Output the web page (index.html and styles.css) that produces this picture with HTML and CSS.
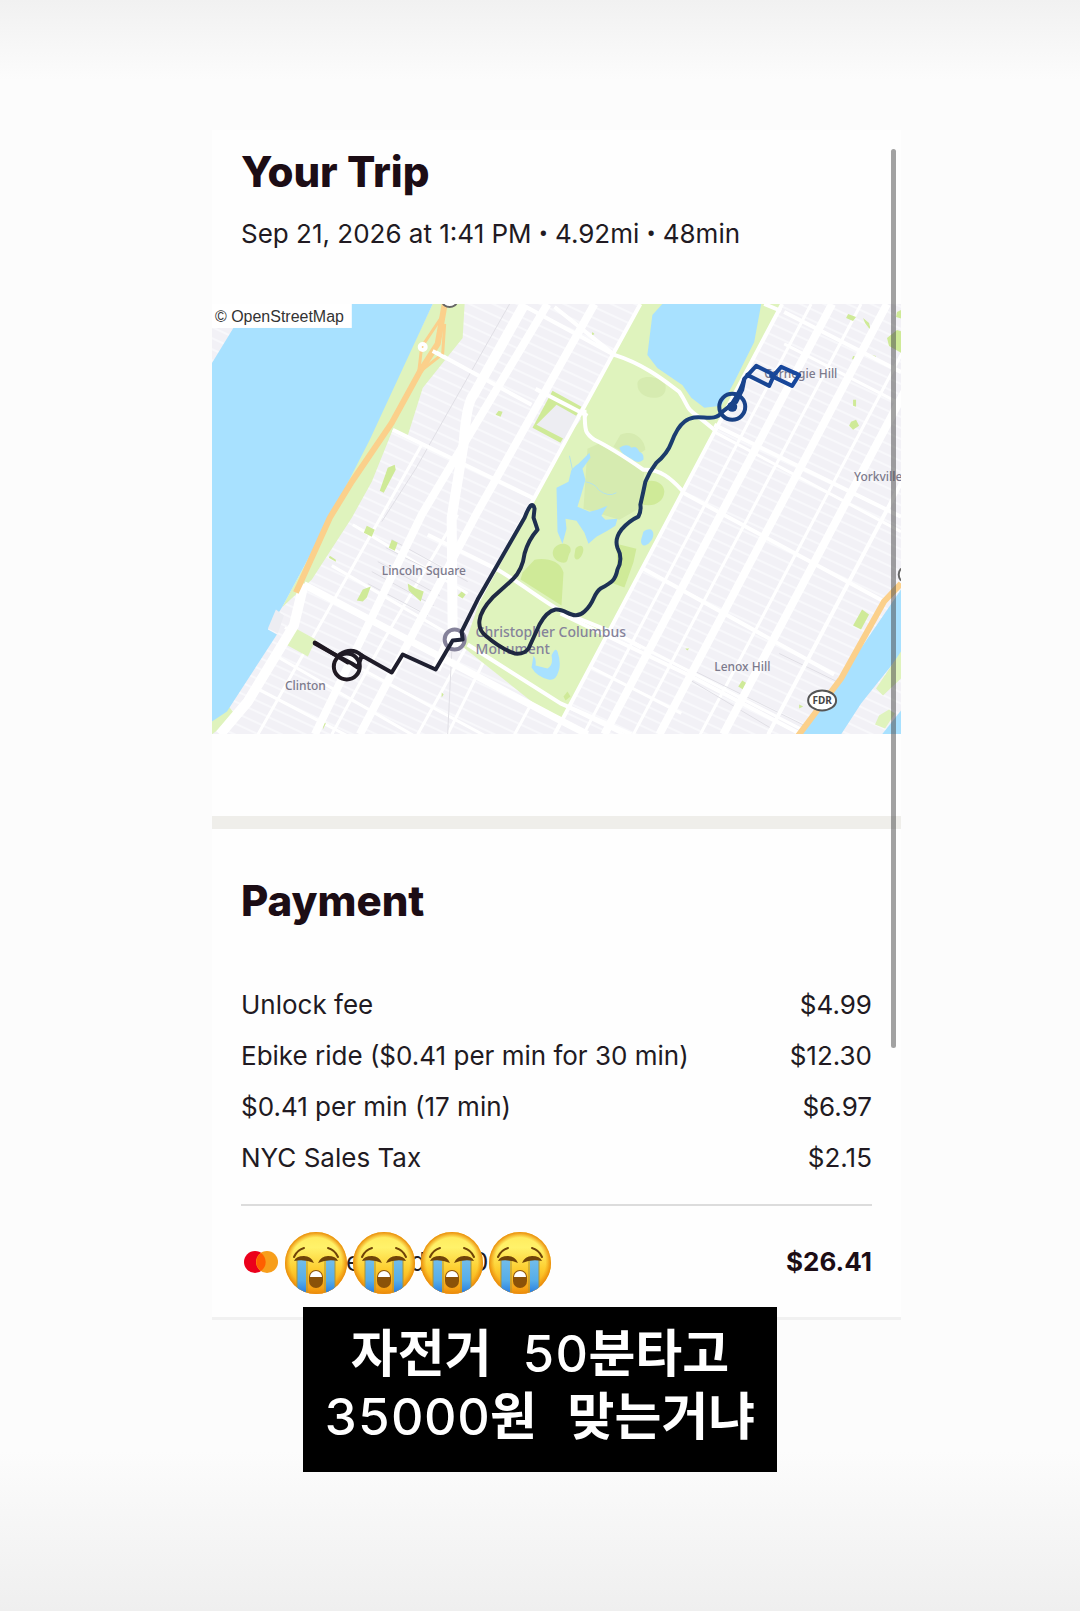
FILE: index.html
```
<!DOCTYPE html>
<html lang="en">
<head>
    <meta charset="UTF-8">
    <meta name="viewport" content="width=device-width, initial-scale=1.0">
    <title>Your Trip</title>
    <link rel="stylesheet" href="styles.css">
</head>
<body>

<main class="story">
    <article class="receipt">
        <div class="scroll-thumb"></div>

        <!-- Trip summary -->
        <header class="trip">
            <h1 class="heading">Your Trip</h1>
            <p class="trip-info">Sep 21, 2026 at 1:41 PM <span class="dot">•</span> 4.92mi <span class="dot">•</span> 48min</p>
        </header>

        <!-- Route map -->
        <svg class="map" viewBox="0 0 690 431" role="img" aria-label="Route map">
            <defs>
                <pattern id="blocks" width="40" height="10" patternUnits="userSpaceOnUse" patternTransform="rotate(25)">
                    <rect width="40" height="10" fill="#f2f1f6"/>
                    <rect width="40" height="2" fill="#f8f8fb"/>
                </pattern>
                <linearGradient id="ride" gradientUnits="userSpaceOnUse" x1="103" y1="340" x2="588" y2="71">
                    <stop offset="0" stop-color="#1f1820"/>
                    <stop offset=".35" stop-color="#1f2a45"/>
                    <stop offset=".7" stop-color="#1c3b66"/>
                    <stop offset="1" stop-color="#1748a0"/>
                </linearGradient>
            </defs>

            <rect width="690" height="431" fill="url(#blocks)"/>

            <!-- Minor streets -->
            <g class="street thin">
                <path d="M210 141L46 431M246 211L170 340L120 431M298 306L236 431M256 341L206 431M328 385L303 431"/>
                <path d="M600 0L372 431M650 0L422 431M717 0L489 431"/>
                <path d="M141 221L256 290M120 262L236 330M73 324L343 470M60 350L250 460M45 385L150 440M256 341L349 400L430 440"/>
                <path d="M503 128L690 228M343 345L470 410M405 330L600 431M573 40L690 100"/>
            </g>
            <g class="rail">
                <path d="M298 0L204 165L170 218M241 330L236 431M180 236L256 278M174 244L236 276M166 258L228 292M160 268L222 302M156 280L216 312M568 350L640 385M476 375L560 425M480 366L690 470"/>
            </g>

            <!-- Parks -->
            <path class="park" d="M429 0H571L349 421L252 344L268 298Z"/>
            <path class="park" d="M221 0H253L251 34L211 84L196 132L181 126L160 178L140 214L100 276L70 304L113 224Z"/>
            <path class="park" d="M82 324L104 336L96 353L74 341ZM0 418L16 402L24 412L0 431Z"/>
            <path class="lawn" d="M341 87L370 103L349 139L321 124Z"/>
            <path class="lawn" d="M176 164l7-3l1 5l-12 23l-4-2ZM155 222l8 4l-3 7l-8-4ZM180 236l6 3l-3 8l-6-3ZM118 252l6 4v2l-7-4ZM145 297l6-11l8-3l-4 11l-4 4ZM196 280l8 5l8 3l-3 10l-12-11ZM250 288l4 3l-3 4l-5-3ZM287 107l4 1l-2 5l-5-2Z"/>
            <path class="lawn" d="M637 10l8 3l-3 4l-7-3ZM652 14l6 5l2 8l-6-8ZM686 8l6-3v10l-7-2ZM676 34l10-8l6 2v22l-14-8ZM642 52l5 1l-2 4l-4-2ZM642 96h3v7l-3-1ZM640 118l5-2l3 6l-6 4l-4-4ZM660 51l5 1l-2 4l-3-2ZM651 306l7 5l-8 15l-8-4ZM531 377l8 5l-4 6l-8-5ZM588 401l4 2l-4 2ZM474 345h4l-2 2ZM112 418l2 2l-3 6ZM230 389l2 2l-2 3ZM381 28l2 2l-3 2Z"/>
            <path class="paved" d="M345 101L370 115L354 136L325 121Z"/>
            <path class="grass" d="M426 80c0-8 18-10 28 0c2 10-4 14-12 14c-9-1-16-5-16-14Z"/>
            <path class="grass" d="M376 145L387 140L433 166L429 204L408 216L372 205Z"/>
            <path class="grass" d="M409 131c12-6 24 3 25 15l-12 8l-20-11Z"/>
            <path class="lawn" d="M311 269L323 256C335 254 349 257 352 269L350 302L309 276ZM343 244c6-7 18-4 16 4c-4 6-1 12-9 11c-8-2-11-9-7-15ZM364 245c5-6 10-2 7 5c-3 8-9 7-8 1ZM405 240l20 5l-3 14l-9 25l-11-4l4-13ZM435 178c8-3 18 2 18 10c-1 12-13 16-24 12Z"/>
            <path class="water" d="M451 0H550L543 38L523 78L510 102L493 104L480 94L471 81L446 64L436 51L441 11Z"/>
            <path class="water" d="M345 184L357 178L360 166L364 162L367 160L378 149L379 154L371 165L374 176L370 190L366 203L378 208L386 206L396 202L390 212L394 216L406 215L404 222L396 227L385 233L377 240L373 229L365 217L354 215L355 225L351 240L346 228Z"/>
            <path class="water" d="M408 144q8-5 12 0q5-3 8 4q5 2 4 8q-6 5-12-1q-10-3-12-11ZM432 228c8-6 12 0 9 7c-6 10-13 8-11 0ZM322 352q3 4 2 10l12 3q6-3 4-13q4-9 6-4q4 12 1 20q-3 10-10 8q-12-3-17-12Z"/>
            <path class="stream" d="M361 166l-3-14M374 178q10 2 13 8q10 8 18 3"/>
            <path class="drive" d="M343 3L403 51C435 61 457 80 468 88C478 103 474 104 486 112L503 126M373 106C374 126 372 128 383 136C400 144 416 155 432 166C449 165 460 175 471 187M284 265C309 279 329 296 349 307C375 320 400 325 430 344M553 0L570 7"/>
            <path class="lawn" d="M352 393l4-5l3 5l-5 4Z"/>

            <!-- Avenues -->
            <g class="street wide">
                <path d="M336 0L210 211L103 431"/>
                <path d="M383 0L266 208L148 431"/>
                <path d="M621 0L393 431M676 0L448 431M740 0L512 431"/>
                <path class="broadway" d="M313 0L262 91Q255 98 252 140L240 214L241 328L224 366"/>
                <path class="broadway" d="M92 280L82 322L36 398L8 431"/>
            </g>
            <g class="street">
                <path d="M429 0L266 298M571 0L343 431M785 0L557 431"/>
                <path d="M220 46L320 101M181 126L321 194M313 2L403 51M216 231L284 265"/>
                <path class="major" d="M92 281L343 414L376 431"/>
                <path d="M573 8L690 68M503 121L690 213M470 188L673 298M430 264L623 371M349 310L476 371L590 431M256 341L349 400L420 431M324 85L376 112"/>
            </g>

            <!-- Rivers -->
            <path class="water" d="M22 23L30 0H221L158 136L113 224L70 304L56 326L65 331L15 408L0 418V59Z"/>
            <path class="paved" d="M64 306L72 312L66 330L56 325Z"/>
            <path class="water" d="M690 286V350L650 400L630 431H591Z"/>
            <path class="park" d="M690 348L665 385L672 392L690 375ZM668 412l10-6l6 4l-10 15l-10-4Z"/>
            <path class="water" d="M690 407L671 431H690Z"/>
            <g class="highway">
                <path d="M233 0L226 40L208 68L180 119L140 178L118 214L90 276L84 289"/>
                <path d="M232 10L210 43L207 68M233 20L231 50L208 68"/>
                <path d="M690 280L673 298L630 375L585 435"/>
            </g>
            <path class="ramp" d="M221 47L234 54"/>
            <circle class="ramp" cx="211" cy="43" r="3"/>
            <path class="road-sign" d="M231 -2a7 5 0 0 0 14 0M690 265a9 9 0 0 0 0 12"/>

            <!-- Place names -->
            <g class="place">
                <text x="170" y="271">Lincoln Square</text>
                <text x="73" y="387">Clinton</text>
                <text x="503" y="368">Lenox Hill</text>
                <text x="553" y="74">Carnegie Hill</text>
                <text x="643" y="177">Yorkville</text>
            </g>
            <g class="place big">
                <text x="264" y="333">Christopher Columbus</text>
                <text x="264" y="351">Monument</text>
            </g>
            <ellipse class="shield" cx="611" cy="397" rx="14" ry="10"/>
            <text class="shield-text" x="611" y="401">FDR</text>

            <!-- Ride -->
            <circle class="stop" cx="243" cy="336" r="10"/>
            <g class="ride">
                <path d="M103 340L121 350L140 360L146 364L150 352L180 369L191 351L224 366L241 337L251 336L250 328L266 296L313 214Q316 206 319 202Q322 200 323 205L322 214L326 226Q317 236 313 250Q311 266 301 276L281 294C265 311 264 325 275 333Q289 345 303 350Q313 351 317 345L328 321Q335 308 344 306C355 305 362 318 373 308C384 298 381 291 389 285C400 279 404 277 406 266Q412 255 406 244Q403 235 410 226Q418 217 427 213Q430 207 429 201Q432 188 434 178Q438 168 445 159Q456 150 460 139Q466 123 473 118C486 107 502 121 511 108L520 101Q531 84 533 75L545 62L563 71L558 82L536 71"/>
                <path d="M103 339L136 359M128 351Q140 343 150 352M525 98L531 86L533 76M563 71L570 63L588 71L581 82L560 72"/>
                <circle cx="135" cy="363" r="13"/>
                <circle cx="521" cy="103" r="13"/>
            </g>
            <circle cx="521" cy="103" r="5" fill="#1b448a"/>

            <rect width="140" height="24" fill="#fff"/>
            <text class="credit" x="3" y="18">© OpenStreetMap</text>
        </svg>

        <!-- Payment -->
        <section class="payment">
            <h2 class="heading">Payment</h2>
            <table class="fees">
                <tbody>
                    <tr><th scope="row">Unlock fee</th><td>$4.99</td></tr>
                    <tr><th scope="row">Ebike ride ($0.41 per min for 30 min)</th><td>$12.30</td></tr>
                    <tr><th scope="row">$0.41 per min (17 min)</th><td>$6.97</td></tr>
                    <tr><th scope="row">NYC Sales Tax</th><td>$2.15</td></tr>
                </tbody>
            </table>
            <div class="total">
                <div class="method">
                    <svg class="card-logo" viewBox="0 0 38 24" aria-hidden="true">
                        <circle cx="14" cy="12" r="11" fill="#eb001b"/>
                        <circle cx="26" cy="12" r="11" fill="#f79e1b"/>
                        <path d="M20 3a11 11 0 0 1 0 18a11 11 0 0 1 0-18Z" fill="#ff5f00"/>
                    </svg>
                    <span>Mastercard ***0</span>
                    <svg class="stickers" viewBox="0 0 272 68" role="img" aria-label="Crying faces">
                        <defs>
                            <linearGradient id="skin" x1="0" y1="0" x2="0" y2="1">
                                <stop offset="0" stop-color="#ffe95a"/>
                                <stop offset=".25" stop-color="#fff26a"/>
                                <stop offset=".6" stop-color="#fdcd2f"/>
                                <stop offset="1" stop-color="#f4940c"/>
                            </linearGradient>
                            <radialGradient id="rim" r=".5">
                                <stop offset=".82" stop-color="#f0980e" stop-opacity="0"/>
                                <stop offset="1" stop-color="#e98a0c"/>
                            </radialGradient>
                            <linearGradient id="tears" x1="0" y1="0" x2="0" y2="1">
                                <stop offset="0" stop-color="#73bdea"/>
                                <stop offset=".6" stop-color="#55ade9"/>
                                <stop offset="1" stop-color="#2277df"/>
                            </linearGradient>
                            <clipPath id="head"><circle cx="34" cy="35" r="31"/></clipPath>
                            <g id="sob">
                                <circle cx="34" cy="35" r="31" fill="url(#skin)"/>
                                <circle cx="34" cy="35" r="31" fill="url(#rim)"/>
                                <g clip-path="url(#head)">
                                    <path d="M15 31h9v36h-9ZM44 31h9v36h-9Z" fill="url(#tears)"/>
                                    <path d="M15 32v35M25 32v35M43 32v35M53 32v35" stroke="#a8953c" stroke-width="1"/>
                                </g>
                                <path d="M12 33Q14 28 22 28Q29 28 32 35Q23 31 12 33ZM56 33Q54 28 46 28Q39 28 36 35Q45 31 56 33Z" fill="#704408"/>
                                <path d="M12 29Q15 22 22 20M56 29Q53 22 46 20" fill="none" stroke="#704408" stroke-width="2" stroke-linecap="round"/>
                                <rect x="27" y="42" width="14" height="18" rx="7" fill="#8b5208"/>
                                <path d="M28 49a6 6 0 0 1 12 0Z" fill="#fff"/>
                            </g>
                        </defs>
                        <use href="#sob"/>
                        <use href="#sob" x="68"/>
                        <use href="#sob" x="136"/>
                        <use href="#sob" x="204"/>
                    </svg>
                </div>
                <strong>$26.41</strong>
            </div>
        </section>
    </article>
</main>

<p class="caption" lang="ko">자전거 <span class="num">50</span>분타고<br><span class="num">35000</span>원 맞는거냐</p>

</body>
</html>
```
FILE: styles.css
```
* {
    box-sizing: border-box;
}

body {
    margin: 0;
    min-height: 100vh;
    font-family: Inter, "Noto Sans", sans-serif;
    font-size: 26px;
    line-height: 32px;
    color: #211a22;
    background: linear-gradient(#f1f1f1, #fcfcfc 80px, #fcfcfc calc(100% - 160px), #efefef);
}

.story {
    padding: 130px 179px 0 212px;
}

.receipt {
    position: relative;
    padding-top: 17px;
    background: #fefefe;
    border-bottom: 3px solid #f1f1f1;
}

/* Scroll indicator lies over the content */
.scroll-thumb {
    position: absolute;
    z-index: 2;
    top: 19px;
    right: 5px;
    width: 5px;
    height: 899px;
    border-radius: 3px;
    background: rgba(70, 70, 70, 0.5);
}

.trip {
    padding: 0 29px;
}

.heading {
    margin: 0;
    font-size: 42px;
    line-height: 50px;
    font-weight: 800;
    color: #1c0d15;
}

.trip-info {
    margin: 21px 0 54px;
}

.dot {
    font-family: Roboto, sans-serif;
}

/* Map */
.map {
    display: block;
    width: 100%;
}

.park { fill: #dff3bd; }
.lawn { fill: #cfea98; }
.grass { fill: #d6ebb0; }
.water { fill: #a8e1ff; }
.paved { fill: #ededf2; }

.stream {
    fill: none;
    stroke: #b5e2e8;
    stroke-width: 1;
}

.street,
.drive {
    fill: none;
    stroke: #fff;
    stroke-width: 4;
    stroke-linejoin: round;
}

.street.thin { stroke-width: 3; }
.street.wide { stroke-width: 8; }
.street .broadway { stroke-width: 10; }
.street .major { stroke-width: 7; }

.rail {
    fill: none;
    stroke: #e0dfe5;
    stroke-width: 1;
}

.highway {
    fill: none;
    stroke: #fbd08b;
    stroke-width: 6;
    stroke-linejoin: round;
}

.highway path:nth-child(2) { stroke-width: 3; }

.ramp {
    fill: none;
    stroke: #fff;
    stroke-width: 4;
}

.road-sign {
    fill: #fff;
    stroke: #666;
    stroke-width: 2;
}

.place {
    font-family: "Noto Sans", sans-serif;
    font-size: 12px;
    font-weight: 500;
    fill: #7c7a8c;
}

.place.big {
    font-size: 14px;
    fill: #85829a;
}

.shield {
    fill: #fff;
    stroke: #555;
    stroke-width: 2;
}

.shield-text {
    font: 700 10px "Noto Sans", sans-serif;
    text-anchor: middle;
    fill: #444;
}

.ride {
    fill: none;
    stroke: url(#ride);
    stroke-width: 4;
    stroke-linecap: round;
    stroke-linejoin: round;
}

.stop {
    fill: #fff;
    stroke: #85829a;
    stroke-width: 4;
}

.credit {
    font: 16px "Liberation Sans", Arial, sans-serif;
    fill: #333;
}

/* Payment */
.payment {
    margin-top: 82px;
    padding: 47px 29px 0;
    border-top: 13px solid #efeeea;
}

.fees {
    width: 100%;
    margin-top: 53px;
    border-collapse: collapse;
}

.fees th,
.fees td {
    height: 51px;
    padding: 0;
    font-weight: 400;
    text-align: left;
}

.fees td {
    text-align: right;
}

.total {
    display: flex;
    justify-content: space-between;
    align-items: center;
    height: 113px;
    margin-top: 21px;
    border-top: 2px solid #dcdcdc;
}

.total strong {
    color: #1c0d15;
}

.method {
    position: relative;
    display: flex;
    align-items: center;
    gap: 7px;
}

.card-logo {
    width: 38px;
    height: 24px;
}

/* Stickers cover the card number */
.stickers {
    position: absolute;
    left: 41px;
    width: 272px;
    height: 68px;
}

/* Story caption */
.caption {
    position: relative;
    width: fit-content;
    margin: -13px auto 0;
    padding: 16px 22px 23px;
    font: 700 51px/62px "DejaVu Sans Mono", "Noto Sans CJK KR", monospace;
    text-align: center;
    white-space: nowrap;
    color: #fff;
    background: #000;
}

.num {
    font-family: Inter, sans-serif;
    font-weight: 500;
    font-variant-numeric: tabular-nums;
}

@media (max-width: 900px) {
    .story {
        padding: 40px 16px 0;
    }
}
```
